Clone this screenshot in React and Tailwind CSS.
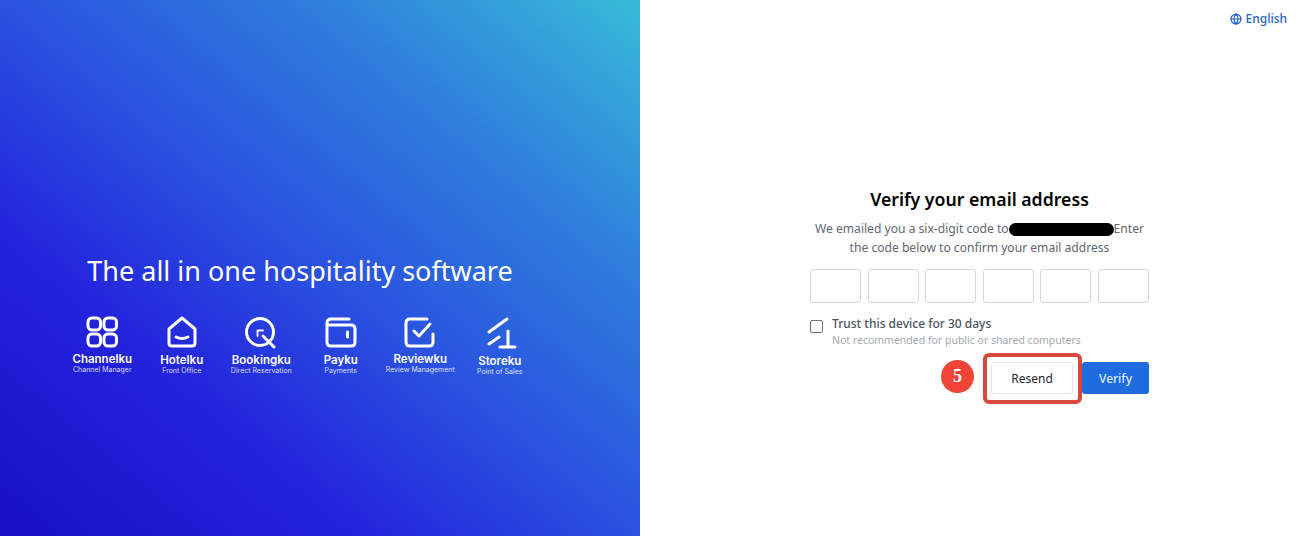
import React from 'react';
import { Globe } from 'lucide-react';

const products = [
  { name: 'Channelku', sub: 'Channel Manager', top: '', icon: (
    <>
      <rect x="3" y="2" width="12.500" height="12" rx="4" />
      <rect x="19" y="2" width="12.500" height="12" rx="4" />
      <rect x="3" y="18" width="12.500" height="12" rx="4" />
      <rect x="19" y="18" width="12.500" height="12" rx="4" />
    </>
  ) },
  { name: 'Hotelku', sub: 'Front Office', top: 'mt-[1px]', icon: (
    <>
      <path d="M17 2 L30 13 V27 Q30 30 27 30 H7 Q4 30 4 27 V13 Z" />
      <path d="M11 21 Q17 24 23 21" />
    </>
  ) },
  { name: 'Bookingku', sub: 'Direct Reservation', top: 'mt-[1px]', icon: (
    <>
      <circle cx="16" cy="16" r="13.500" />
      <path d="M13.500 20 V14.500 H19" strokeWidth="1.800" />
      <path d="M19 20 L30 31" />
    </>
  ) },
  { name: 'Payku', sub: 'Payments', top: 'mt-[1px]', icon: (
    <>
      <path d="M25 3 H7 Q3 3 3 7 V26 Q3 30 7 30 H27 Q31 30 31 26 V13 Q31 9 27 9 H3" />
      <path d="M23.500 16 V21" />
    </>
  ) },
  { name: 'Reviewku', sub: 'Review Management', top: '', icon: (
    <>
      <path d="M24 3 H7 Q3 3 3 7 V26 Q3 30 7 30 H26 Q30 30 30 26 V18" />
      <path d="M11 15 L16 20 L27 8" />
    </>
  ) },
  { name: 'Storeku', sub: 'Point of Sales', top: 'mt-[2px]', icon: (
    <>
      <path d="M6 16 L24 3" />
      <path d="M6 28 L16 21" />
      <path d="M25 15 V30" />
      <path d="M17 31 H32" />
    </>
  ) },
];

function Product({ item }) {
  return (
    <div className="flex flex-col items-center text-white w-[79.500px]">
      <svg viewBox="0 0 34 34" fill="none" stroke="currentColor" strokeWidth="3" strokeLinecap="round" strokeLinejoin="round" className="w-[34px] h-[34px] mb-[3px]">
        {item.icon}
      </svg>
      <span className={`text-[11.500px] leading-[13px] font-semibold whitespace-nowrap font-['Inter',sans-serif] ${item.top}`}>{item.name}</span>
      <span className="text-[7px] leading-[8px] opacity-80 whitespace-nowrap font-['Inter',sans-serif]">{item.sub}</span>
    </div>
  );
}

export default function App() {
  return (
    <div className="flex w-[1312px] h-[536px] overflow-hidden font-['Noto_Sans',sans-serif]">
      {/* Left panel */}
      <div className="w-[640px] h-full flex flex-col items-center justify-center pr-[40px] pt-[93px] bg-[linear-gradient(to_top_right,#1810c4_0%,#2323dc_28%,#2a52e0_50%,#2f80dc_75%,#37bcd8_100%)]">
        <h2 className="text-[27px] leading-[36px] text-white font-normal whitespace-nowrap">The all in one hospitality software</h2>
        <div className="flex justify-center items-start mt-[27px] ml-[2px]">
          {products.map(p => <Product key={p.name} item={p} />)}
        </div>
      </div>

      {/* Right panel */}
      <div className="relative w-[672px] h-full bg-white flex flex-col">
        <div className="flex justify-end items-center gap-[4px] pt-[11px] pr-[25px] text-[12px] leading-[16px] font-medium text-[#2563c9]">
          <Globe size={12} strokeWidth={2.4} />
          <span>English</span>
        </div>

        <div className="ml-[170px] mt-[161px] w-[339px]">
          <h1 className="text-[17.700px] leading-[23px] font-semibold text-black text-center">Verify your email address</h1>
          <p className="mt-[8px] text-[12.100px] leading-[19px] text-[#5f6672] text-center whitespace-nowrap">
            We emailed you a six-digit code to
            <span className="inline-block align-middle w-[105px] h-[13px] rounded-full bg-black mb-[1px]" />
            Enter<br />the code below to confirm your email address
          </p>

          <div className="grid grid-cols-6 gap-[6.600px] mt-[12px]">
            {[0, 1, 2, 3, 4, 5].map(i => (
              <input key={i} className="w-full h-[34px] border border-[#d4d6da] rounded-[3px] bg-white" />
            ))}
          </div>

          <div className="flex items-start mt-[13px]">
            <span className="w-[13px] h-[13px] mt-[4px] border border-[#6b6f76] rounded-[2px] bg-white" />
            <div className="ml-[9px]">
              <div className="text-[12px] leading-[16px] font-medium text-[#4b5260]">Trust this device for 30 days</div>
              <div className="text-[10.500px] leading-[15px] mt-[1px] text-[#a3a8b0]">Not recommended for public or shared computers</div>
            </div>
          </div>

          <div className="flex justify-end gap-[9px] mt-[14px]">
            <div className="relative">
              <button className="w-[82px] h-[32px] pt-[1px] border border-[#e2e4e8] rounded-[3px] bg-white text-[12px] text-[#23272e]">Resend</button>
              <div className="absolute left-[-8px] right-[-9px] top-[-9px] bottom-[-10px] border-[4px] border-[#d9483c] rounded-[6px]" />
              <div className="absolute left-[-50px] top-[-2px] w-[33px] h-[33px] rounded-full bg-[#f04438] text-white text-[18px] font-bold flex items-center justify-center font-['Liberation_Serif',serif]">5</div>
            </div>
            <button className="w-[67px] h-[32px] pt-[1px] rounded-[3px] bg-[#1f6be0] text-[#dbe9ff] text-[12px] font-medium">Verify</button>
          </div>
        </div>
      </div>
    </div>
  );
}
